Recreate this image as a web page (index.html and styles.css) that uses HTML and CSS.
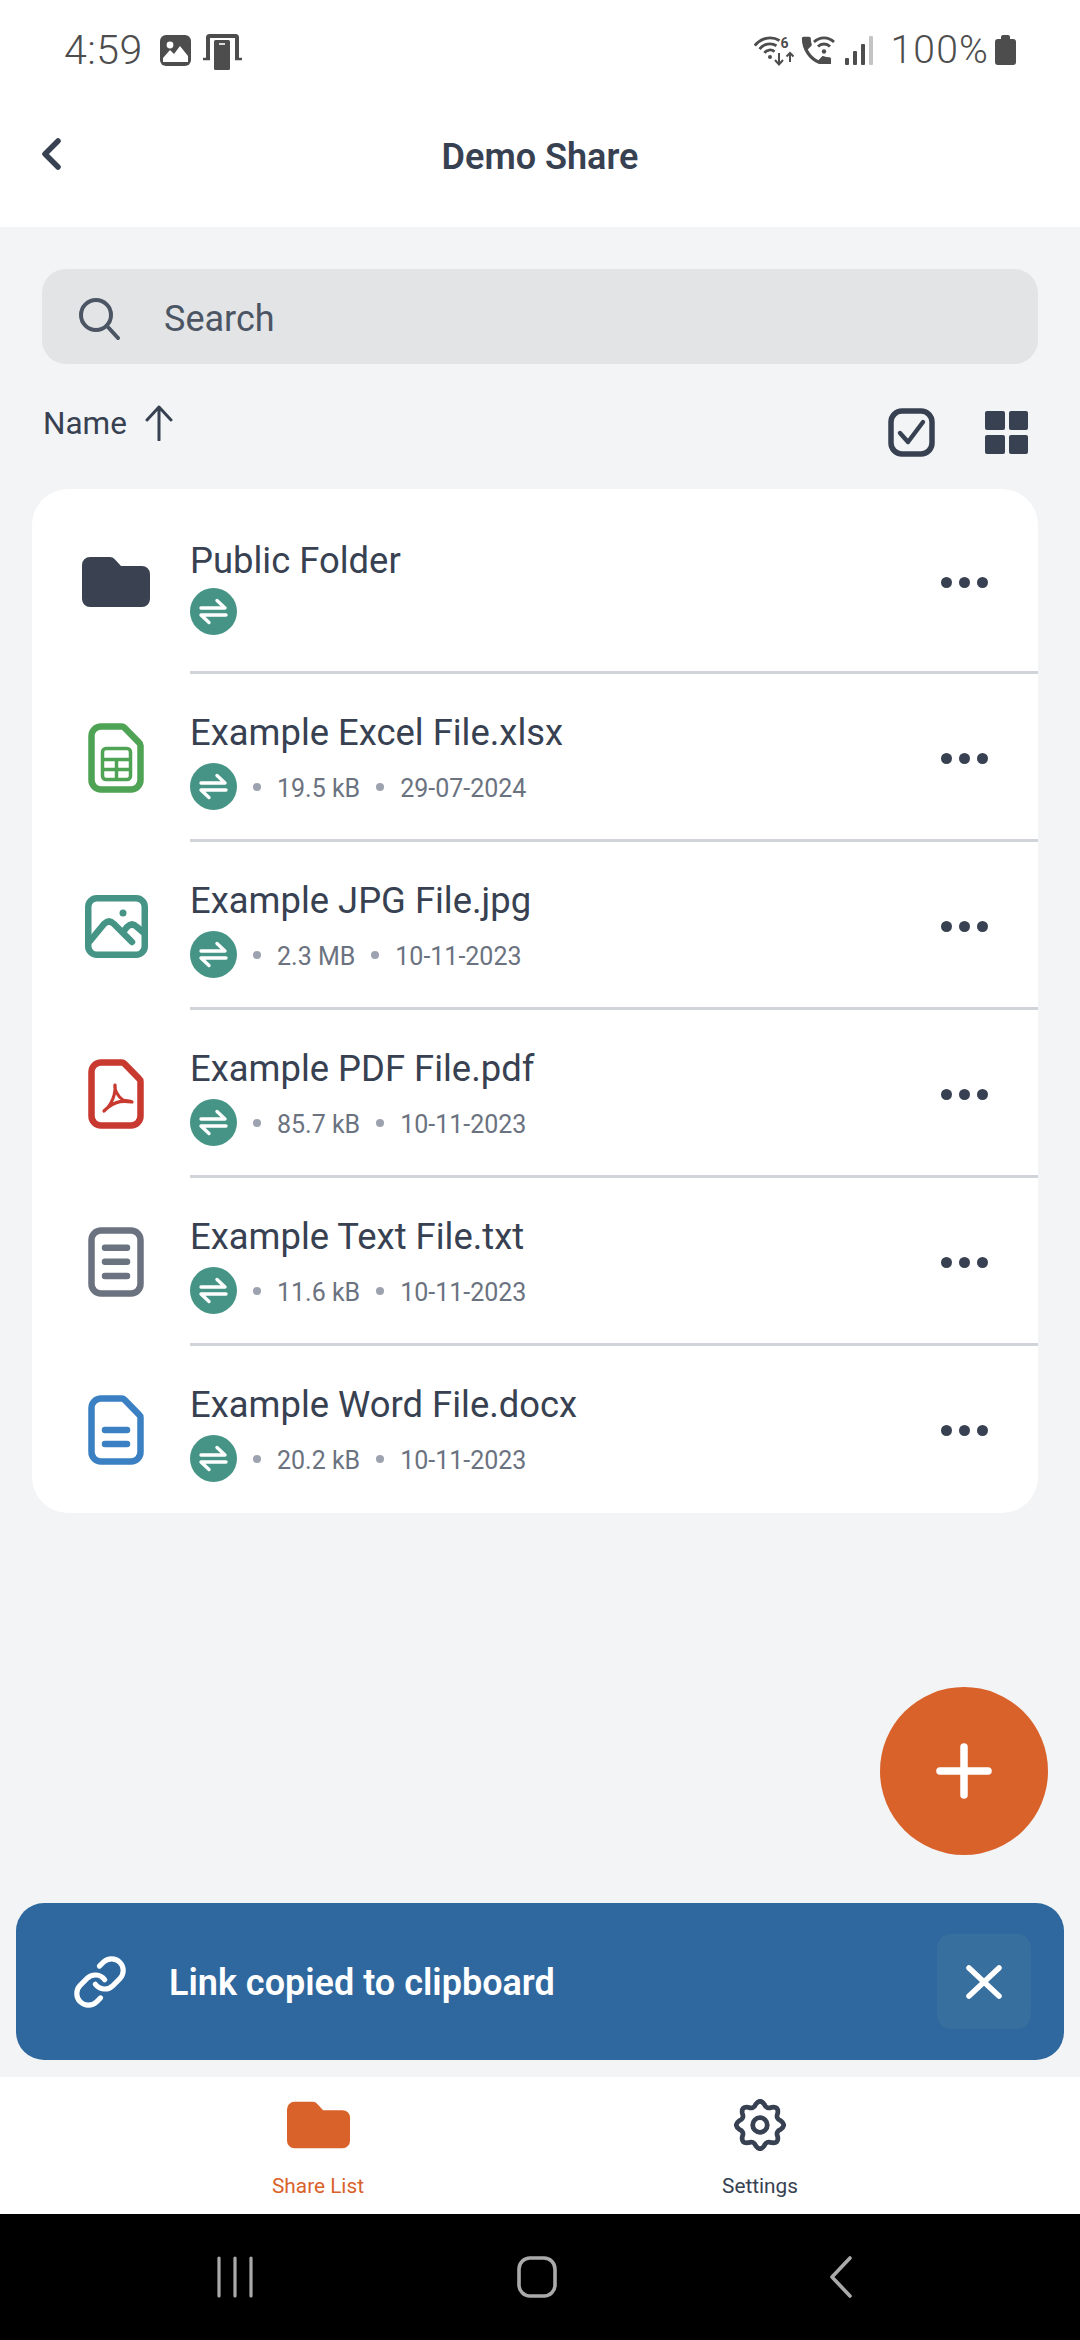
FILE: index.html
```html
<!DOCTYPE html>
<html lang="en">
<head>
    <meta charset="UTF-8">
    <meta name="viewport" content="width=device-width, initial-scale=1.0">
    <title>Demo Share</title>
    <link rel="stylesheet" href="styles.css">
</head>
<body>
    <div class="status-bar">
        <span class="status-time">4:59</span>
        <svg class="st-image" width="31" height="31" viewBox="0 0 31 31"><rect width="31" height="31" rx="6" fill="#4d4d4d"/><circle cx="10" cy="10" r="3.4" fill="#fff"/><path d="M3 27v-4l7-8 4 4 6-8 8 10v6z" fill="#fff"/></svg>
        <svg class="st-cast" width="39" height="36" viewBox="0 0 39 36"><path d="M5 24V3.5a1.5 1.5 0 0 1 1.5-1.5h26A1.5 1.5 0 0 1 34 3.5V24" fill="none" stroke="#4d4d4d" stroke-width="4"/><path d="M0 25h7M32 25h7" stroke="#4d4d4d" stroke-width="2.5"/><rect x="9" y="5" width="21" height="31" rx="2" fill="#fff"/><rect x="11" y="6" width="16" height="30" rx="1.5" fill="#4d4d4d"/><path d="M16 10h6" stroke="#fff" stroke-width="1.6"/></svg>
        <span class="status-spacer"></span>
        <svg class="st-wifi" width="40" height="31" viewBox="0 0 40 31" fill="none" stroke="#4d4d4d" stroke-width="2.8"><path d="M.8 10.6A19 19 0 0 1 25.5 5.5M5.6 14.2A13 13 0 0 1 22.5 10.7M10.4 17.8A7 7 0 0 1 20.5 16.6"/><circle cx="16" cy="22" r="2" fill="#4d4d4d" stroke="none"/><text x="26.5" y="13" font-family="Roboto" font-size="14" font-weight="700" fill="#4d4d4d" stroke="none">6</text><path d="M25 18v11M21 25l4 4.500 4-4.500M36 27v-9M32.500 21.500l3.500-3.500 3.500 3.500" stroke-width="2"/></svg>
        <svg class="st-call" width="34" height="28" viewBox="0 0 34 28"><g transform="translate(-4 -4) scale(1.62)"><path fill="#4d4d4d" d="M6.620 10.790c1.440 2.830 3.760 5.140 6.590 6.590l2.200-2.200c.27-.27.67-.36 1.020-.24 1.120.37 2.330.57 3.570.57.55 0 1 .45 1 1V20c0 .55-.45 1-1 1-9.390 0-17-7.610-17-17 0-.55.45-1 1-1h3.500c.55 0 1 .45 1 1 0 1.250.2 2.450.57 3.570.11.35.03.74-.25 1.020l-2.200 2.200z"/></g><path d="M13 6A14 14 0 0 1 33 6M17 10.500A8.500 8.500 0 0 1 29 10.500" fill="none" stroke="#4d4d4d" stroke-width="2.800"/><circle cx="23" cy="15.500" r="2.200" fill="#4d4d4d"/></svg>
        <svg class="st-signal" width="29" height="29" viewBox="0 0 29 29"><rect x="0" y="22" width="4" height="7" rx="1" fill="#4d4d4d"/><rect x="8" y="15" width="4" height="14" rx="1" fill="#4d4d4d"/><rect x="16" y="8" width="4" height="21" rx="1" fill="#4d4d4d"/><rect x="24" y="0" width="4" height="29" rx="1" fill="#c4c4c4"/></svg>
        <span class="status-battery">100%</span>
        <svg class="st-battery" width="21" height="30" viewBox="0 0 21 30"><path d="M6 2a2 2 0 0 1 2-2h5a2 2 0 0 1 2 2v2h3a3 3 0 0 1 3 3v20a3 3 0 0 1-3 3H3a3 3 0 0 1-3-3V7a3 3 0 0 1 3-3h3z" fill="#4d4d4d"/></svg>
    </div>

    <header class="app-header">
        <svg class="back-icon" width="22" height="32" viewBox="0 0 22 32" fill="none" stroke="#374151" stroke-width="5.500" stroke-linecap="round" stroke-linejoin="round"><path d="M18 3L5 16l13 13"/></svg>
        <h1 class="app-title">Demo Share</h1>
        <span></span>
    </header>

    <main class="content">
        <div class="search-box">
            <svg width="42" height="42" viewBox="0 0 42 42" fill="none" stroke="#4b5563" stroke-width="4" stroke-linecap="round"><circle cx="17" cy="17" r="15"/><path d="M28 28l11 12"/></svg>
            <span class="search-text">Search</span>
        </div>

        <div class="sort-row">
            <div class="sort-name">
                <span class="sort-label">Name</span>
                <svg width="28" height="36" viewBox="0 0 28 36" fill="none" stroke="#374151" stroke-width="3" stroke-linecap="round" stroke-linejoin="round"><path d="M14 2v33M2 15L14 2l12 13"/></svg>
            </div>
            <div class="sort-tools">
                <svg class="tool-check" width="47" height="49" viewBox="0 0 47 49" fill="none" stroke="#374151"><rect x="3" y="3" width="41" height="43" rx="11" stroke-width="5.500"/><path d="M12 25l8 9 15-20" stroke-width="4.400" stroke-linecap="round" stroke-linejoin="round"/></svg>
                <svg class="tool-grid" width="43" height="43" viewBox="0 0 43 43" fill="#374151"><rect width="20" height="19" rx="2"/><rect x="24" width="19" height="19" rx="2"/><rect y="24" width="20" height="19" rx="2"/><rect x="24" y="24" width="19" height="19" rx="2"/></svg>
            </div>
        </div>

        <section class="file-card">
            <div class="file-row file-row-first">
                <div class="file-icon">
                    <svg width="68" height="50" viewBox="0 0 68 50"><path fill="#3a4252" d="M8 0h20a6 6 0 0 1 4.500 2L39 9h21a8 8 0 0 1 8 8v25a8 8 0 0 1-8 8H8a8 8 0 0 1-8-8V8a8 8 0 0 1 8-8z"/></svg>
                </div>
                <div class="file-main">
                    <div class="file-text">
                        <div class="file-name">Public Folder</div>
                        <div class="file-meta">
                            <svg class="badge" width="47" height="47" viewBox="0 0 47 47"><circle cx="23.500" cy="23.500" r="23.500" fill="#459485"/><path d="M11 20h24l-8-7.500M36 27H11l8 7.500" fill="none" stroke="#fff" stroke-width="3.400" stroke-linecap="round" stroke-linejoin="round"/></svg>
                        </div>
                    </div>
                    <div class="more"><i></i><i></i><i></i></div>
                </div>
            </div>

            <div class="file-row">
                <div class="file-icon">
                    <svg width="56" height="70" viewBox="0 0 56 70" fill="none" stroke="#4fa354"><path stroke-width="6.500" d="M13 3.500h20.500a4 4 0 0 1 3 1.200L51 19.500a4 4 0 0 1 1.500 3.200V57a9.500 9.500 0 0 1-9.500 9.500H13A9.500 9.500 0 0 1 3.500 57V13A9.500 9.500 0 0 1 13 3.500z"/><rect x="14.500" y="25.500" width="28" height="31" rx="3.500" stroke-width="3.500"/><path stroke-width="3.500" d="M14.500 36.500h28M14.500 46.500h28M28.500 36.500v20"/></svg>
                </div>
                <div class="file-main">
                    <div class="file-text">
                        <div class="file-name">Example Excel File.xlsx</div>
                        <div class="file-meta">
                            <svg class="badge" width="47" height="47" viewBox="0 0 47 47"><circle cx="23.500" cy="23.500" r="23.500" fill="#459485"/><path d="M11 20h24l-8-7.500M36 27H11l8 7.500" fill="none" stroke="#fff" stroke-width="3.400" stroke-linecap="round" stroke-linejoin="round"/></svg>
                            <i class="meta-dot"></i><span>19.5 kB</span><i class="meta-dot"></i><span>29-07-2024</span>
                        </div>
                    </div>
                    <div class="more"><i></i><i></i><i></i></div>
                </div>
            </div>

            <div class="file-row">
                <div class="file-icon">
                    <svg width="63" height="63" viewBox="0 0 63 63" fill="none" stroke="#459485" stroke-width="6.500" stroke-linecap="round" stroke-linejoin="round"><rect x="3.250" y="3.250" width="56.500" height="56.500" rx="8.500"/><path d="M5 46l14-17q5-5 10 0l18 18M38 37l4-5q5-5 10 0l7 6"/><circle cx="38" cy="18" r="3.500" fill="#459485" stroke="none"/></svg>
                </div>
                <div class="file-main">
                    <div class="file-text">
                        <div class="file-name">Example JPG File.jpg</div>
                        <div class="file-meta">
                            <svg class="badge" width="47" height="47" viewBox="0 0 47 47"><circle cx="23.500" cy="23.500" r="23.500" fill="#459485"/><path d="M11 20h24l-8-7.500M36 27H11l8 7.500" fill="none" stroke="#fff" stroke-width="3.400" stroke-linecap="round" stroke-linejoin="round"/></svg>
                            <i class="meta-dot"></i><span>2.3 MB</span><i class="meta-dot"></i><span>10-11-2023</span>
                        </div>
                    </div>
                    <div class="more"><i></i><i></i><i></i></div>
                </div>
            </div>

            <div class="file-row">
                <div class="file-icon">
                    <svg width="56" height="70" viewBox="0 0 56 70" fill="none" stroke="#c8392f"><path stroke-width="6.500" d="M13 3.500h20.500a4 4 0 0 1 3 1.200L51 19.500a4 4 0 0 1 1.500 3.200V57a9.500 9.500 0 0 1-9.500 9.500H13A9.500 9.500 0 0 1 3.500 57V13A9.500 9.500 0 0 1 13 3.500z"/><path stroke-width="3.200" stroke-linecap="round" stroke-linejoin="round" d="M16 52c8-6 12-18 11-26-1 4 3 12 8 15 3 1 7 1 9 2-6-1-16-3-28 9z"/></svg>
                </div>
                <div class="file-main">
                    <div class="file-text">
                        <div class="file-name">Example PDF File.pdf</div>
                        <div class="file-meta">
                            <svg class="badge" width="47" height="47" viewBox="0 0 47 47"><circle cx="23.500" cy="23.500" r="23.500" fill="#459485"/><path d="M11 20h24l-8-7.500M36 27H11l8 7.500" fill="none" stroke="#fff" stroke-width="3.400" stroke-linecap="round" stroke-linejoin="round"/></svg>
                            <i class="meta-dot"></i><span>85.7 kB</span><i class="meta-dot"></i><span>10-11-2023</span>
                        </div>
                    </div>
                    <div class="more"><i></i><i></i><i></i></div>
                </div>
            </div>

            <div class="file-row">
                <div class="file-icon">
                    <svg width="56" height="70" viewBox="0 0 56 70" fill="none" stroke="#6b7280" stroke-width="6.500" stroke-linecap="round"><rect x="3.500" y="3.500" width="49" height="63" rx="9.500"/><path d="M17 20.700h22M17 34.700h22M17 49h22"/></svg>
                </div>
                <div class="file-main">
                    <div class="file-text">
                        <div class="file-name">Example Text File.txt</div>
                        <div class="file-meta">
                            <svg class="badge" width="47" height="47" viewBox="0 0 47 47"><circle cx="23.500" cy="23.500" r="23.500" fill="#459485"/><path d="M11 20h24l-8-7.500M36 27H11l8 7.500" fill="none" stroke="#fff" stroke-width="3.400" stroke-linecap="round" stroke-linejoin="round"/></svg>
                            <i class="meta-dot"></i><span>11.6 kB</span><i class="meta-dot"></i><span>10-11-2023</span>
                        </div>
                    </div>
                    <div class="more"><i></i><i></i><i></i></div>
                </div>
            </div>

            <div class="file-row file-row-last">
                <div class="file-icon">
                    <svg width="56" height="70" viewBox="0 0 56 70" fill="none" stroke="#3a80c2" stroke-width="6.500" stroke-linecap="round"><path d="M13 3.500h20.500a4 4 0 0 1 3 1.200L51 19.500a4 4 0 0 1 1.500 3.200V57a9.500 9.500 0 0 1-9.500 9.500H13A9.500 9.500 0 0 1 3.500 57V13A9.500 9.500 0 0 1 13 3.500z"/><path d="M17 35h22M17 49h22"/></svg>
                </div>
                <div class="file-main">
                    <div class="file-text">
                        <div class="file-name">Example Word File.docx</div>
                        <div class="file-meta">
                            <svg class="badge" width="47" height="47" viewBox="0 0 47 47"><circle cx="23.500" cy="23.500" r="23.500" fill="#459485"/><path d="M11 20h24l-8-7.500M36 27H11l8 7.500" fill="none" stroke="#fff" stroke-width="3.400" stroke-linecap="round" stroke-linejoin="round"/></svg>
                            <i class="meta-dot"></i><span>20.2 kB</span><i class="meta-dot"></i><span>10-11-2023</span>
                        </div>
                    </div>
                    <div class="more"><i></i><i></i><i></i></div>
                </div>
            </div>
        </section>

        <button class="fab">
            <svg width="56" height="56" viewBox="0 0 56 56" stroke="#fff" stroke-width="7.500" stroke-linecap="round"><path d="M28 4v48M4 28h48"/></svg>
        </button>

        <div class="toast">
            <svg width="56" height="56" viewBox="0 0 24 24" fill="none" stroke="#fff" stroke-width="2.200" stroke-linecap="round" stroke-linejoin="round"><path d="M10 13a5 5 0 0 0 7.540.54l3-3a5 5 0 0 0-7.070-7.070l-1.720 1.710"/><path d="M14 11a5 5 0 0 0-7.540-.54l-3 3a5 5 0 0 0 7.070 7.070l1.710-1.710"/></svg>
            <span class="toast-text">Link copied to clipboard</span>
            <button class="toast-close">
                <svg width="36" height="34" viewBox="0 0 36 34" stroke="#fff" stroke-width="5.500" stroke-linecap="round"><path d="M3 3l30 28M33 3L3 31"/></svg>
            </button>
        </div>
    </main>

    <nav class="tab-bar">
        <div class="tab tab-active">
            <div class="tab-icon">
                <svg width="63" height="48" viewBox="0 0 68 50"><path fill="#d9622b" d="M8 0h20a6 6 0 0 1 4.500 2L39 9h21a8 8 0 0 1 8 8v25a8 8 0 0 1-8 8H8a8 8 0 0 1-8-8V8a8 8 0 0 1 8-8z"/></svg>
            </div>
            <span class="tab-label">Share List</span>
        </div>
        <div class="tab">
            <div class="tab-icon">
                <svg width="52" height="52" viewBox="-1 -1 50 50" fill="none" stroke="#374151" stroke-width="4.600"><path d="M44.110 20Q49.500 24 44.110 28Q38.780 30.120 41.040 35.390Q42.030 42.030 35.390 41.040Q30.120 38.780 28 44.110Q24 49.500 20 44.110Q17.880 38.780 12.610 41.040Q5.970 42.030 6.960 35.390Q9.220 30.120 3.890 28Q-1.500 24 3.890 20Q9.220 17.880 6.960 12.610Q5.970 5.970 12.610 6.960Q17.880 9.220 20 3.890Q24 -1.500 28 3.890Q30.120 9.220 35.390 6.960Q42.030 5.970 41.040 12.610Q38.780 17.880 44.110 20Z"/><circle cx="24" cy="24" r="7"/></svg>
            </div>
            <span class="tab-label">Settings</span>
        </div>
    </nav>

    <div class="nav-bar">
        <svg class="nav-recents" width="36" height="42" viewBox="0 0 36 42" stroke="#aaa" stroke-width="3.200" stroke-linecap="round"><path d="M2 2v38M18 2v38M34 2v38"/></svg>
        <svg class="nav-home" width="40" height="42" viewBox="0 0 40 42" fill="none" stroke="#aaa" stroke-width="3.600"><rect x="2" y="2" width="36" height="38" rx="11"/></svg>
        <svg class="nav-back" width="22" height="42" viewBox="0 0 22 42" fill="none" stroke="#aaa" stroke-width="3.600" stroke-linecap="round" stroke-linejoin="round"><path d="M20 2L2 21l18 19"/></svg>
    </div>
</body>
</html>
```

FILE: styles.css
```css
* {
    box-sizing: border-box;
}
body {
    margin: 0;
    width: 1080px;
    height: 2340px;
    display: flex;
    flex-direction: column;
    overflow: hidden;
    background-color: #f3f4f6;
    color: #374151;
    font-family: Roboto, "Noto Sans", sans-serif;
}
svg {
    display: block;
    flex: none;
}

/* status bar */
.status-bar {
    height: 100px;
    padding: 0 64px;
    display: flex;
    align-items: center;
    background-color: #fff;
    color: #4d4d4d;
}
.status-time {
    font-size: 41px;
    font-weight: 300;
    letter-spacing: 0.5px;
}
.st-image {
    margin-left: 17px;
}
.st-cast {
    margin-left: 12px;
    align-self: flex-start;
    margin-top: 34px;
}
.status-spacer {
    flex: 1;
}
.st-call {
    margin-left: 7px;
}
.st-signal {
    margin-left: 10px;
}
.status-battery {
    margin-left: 16px;
    font-size: 39px;
    font-weight: 300;
    letter-spacing: 1.2px;
}
.st-battery {
    margin-left: 6px;
}

/* header */
.app-header {
    height: 127px;
    padding: 0 40px 14px;
    display: grid;
    grid-template-columns: 1fr auto 1fr;
    align-items: center;
    background-color: #fff;
}
.back-icon {
    margin-bottom: 5px;
}
.app-title {
    margin: 0;
    font-size: 36px;
    font-weight: 600;
    color: #374151;
}

/* main content */
.content {
    position: relative;
    flex: 1;
}
.search-box {
    height: 95px;
    margin: 42px 42px 0;
    padding: 4px 0 0 37px;
    display: flex;
    align-items: center;
    gap: 43px;
    border-radius: 24px;
    background-color: #e3e4e6;
}
.search-text {
    font-size: 36px;
    color: #4b5563;
}
.sort-row {
    height: 52px;
    margin: 41px 52px 0 43px;
    display: flex;
    justify-content: space-between;
    align-items: flex-start;
}
.sort-name {
    display: flex;
    align-items: flex-start;
    gap: 18px;
}
.sort-label {
    padding-top: 1px;
    line-height: 36px;
    font-size: 31.5px;
}
.sort-tools {
    display: flex;
    align-items: flex-start;
    gap: 50px;
}
.tool-check {
    margin-top: 3px;
}
.tool-grid {
    margin-top: 6px;
}

/* file list */
.file-card {
    margin: 32px 42px 0 32px;
    border-radius: 36px;
    background-color: #fff;
}
.file-row {
    display: flex;
    align-items: center;
}
.file-icon {
    width: 100px;
    margin: 0 24px 0 34px;
    display: flex;
    justify-content: center;
}
.file-main {
    flex: 1;
    padding: 37px 50px 29px 0;
    display: flex;
    justify-content: space-between;
    align-items: center;
    border-bottom: 3px solid #d1d5db;
}
.file-row-first .file-main {
    padding-top: 50px;
    padding-bottom: 36px;
}
.file-row-first .file-name {
    margin-bottom: 5px;
}
.file-row-first .more {
    margin-bottom: 10px;
}
.file-row-last .file-main {
    padding-bottom: 31px;
    border-bottom: none;
}
.file-name {
    margin-bottom: 8px;
    line-height: 44px;
    font-size: 36.4px;
}
.file-meta {
    height: 47px;
    display: flex;
    align-items: center;
    gap: 16px;
    font-size: 25px;
    color: #6b7280;
}
.file-meta span {
    padding-top: 4px;
}
.meta-dot {
    width: 8px;
    height: 8px;
    border-radius: 50%;
    background-color: #9ca3af;
}
.more {
    margin-bottom: 4px;
    display: flex;
    gap: 7px;
}
.more i {
    width: 11px;
    height: 11px;
    border-radius: 50%;
    background-color: #374151;
}

/* floating button and toast lie over the page */
.fab {
    position: absolute;
    top: 1460px;
    right: 32px;
    width: 168px;
    height: 168px;
    padding: 0;
    display: flex;
    align-items: center;
    justify-content: center;
    border: none;
    border-radius: 50%;
    background-color: #d9622b;
}
.toast {
    position: absolute;
    top: 1676px;
    left: 16px;
    right: 16px;
    height: 157px;
    padding: 0 33px 0 56px;
    display: flex;
    align-items: center;
    border-radius: 28px;
    background-color: #2f689e;
}
.toast-text {
    flex: 1;
    margin-left: 41px;
    padding-top: 2px;
    font-size: 36px;
    font-weight: 600;
    color: #fff;
}
.toast-close {
    width: 94px;
    height: 95px;
    padding: 0;
    display: flex;
    align-items: center;
    justify-content: center;
    border: none;
    border-radius: 14px;
    background-color: #376f9f;
}

/* bottom tabs */
.tab-bar {
    height: 137px;
    padding: 21px 97px 0;
    display: flex;
    background-color: #fff;
}
.tab {
    width: 442px;
    display: flex;
    flex-direction: column;
    align-items: center;
    color: #374151;
}
.tab-icon {
    height: 53px;
    display: flex;
    align-items: center;
}
.tab-label {
    margin-top: 23px;
    line-height: 24px;
    font-size: 20.8px;
}
.tab-active {
    color: #d9622b;
}

/* android navigation */
.nav-bar {
    height: 126px;
    padding-left: 217px;
    display: flex;
    align-items: center;
    background-color: #000;
}
.nav-home {
    margin-left: 264px;
}
.nav-back {
    margin-left: 273px;
}
```
